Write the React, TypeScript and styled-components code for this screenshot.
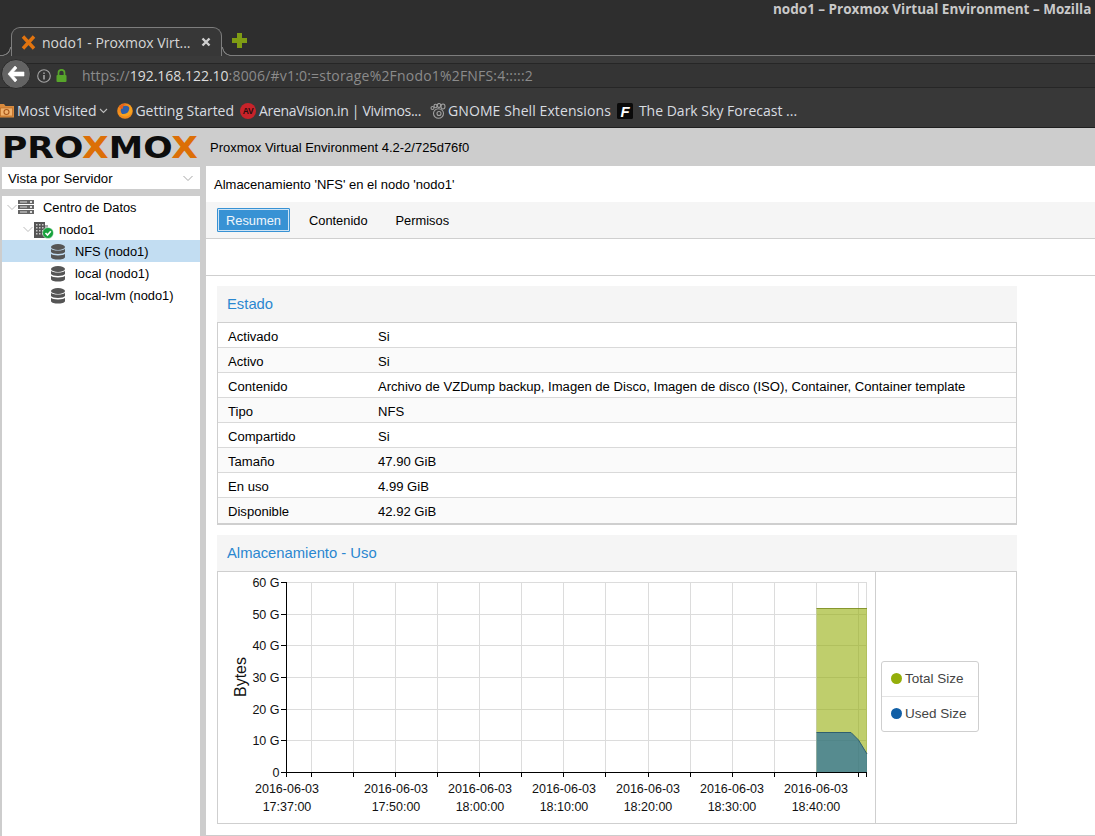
import React from "react";
import styled, { createGlobalStyle } from "styled-components";

const Global = createGlobalStyle`
  html, body { margin: 0; padding: 0; background: #cdcdcd; }
  body { width: 1095px; height: 836px; overflow: hidden; }
  * { box-sizing: border-box; }
`;

const Page = styled.div`
  width: 1095px;
  height: 836px;
  display: flex;
  flex-direction: column;
  overflow: hidden;
  font-family: "Liberation Sans", Arial, sans-serif;
  font-size: 12.85px;
  color: #000;
`;

const TitleBar = styled.div`
  height: 27px;
  background: #2e2e2e;
  padding: 0 0 0 773px;
  color: #c9c9c9;
  font: 700 13.5px/18px "Open Sans", sans-serif;
  white-space: nowrap;
  overflow: hidden;
`;

const TabStrip = styled.div`
  height: 29px;
  background: #2e2e2e;
  border-bottom: 1px solid #7d7d7d;
  display: flex;
  align-items: flex-start;
  padding-left: 11px;
`;

const Tab = styled.div`
  position: relative;
  width: 211px;
  height: 29px;
  background: #373737;
  border: 1px solid #7d7d7d;
  border-bottom: none;
  border-radius: 9px 9px 0 0;
  display: flex;
  align-items: center;
  padding: 0 0 0 9px;
  color: #d6d6d6;
  font: 400 14px "Open Sans", sans-serif;
  letter-spacing: -0.05px;
  white-space: nowrap;
  &::before, &::after {
    content: "";
    position: absolute;
    bottom: 0;
    width: 9px;
    height: 9px;
  }
  &::before {
    left: -10px;
    background: radial-gradient(circle at 0 0, #2e2e2e 7.5px, #7d7d7d 8px, #7d7d7d 8.6px, #373737 9px);
  }
  &::after {
    right: -10px;
    background: radial-gradient(circle at 100% 0, #2e2e2e 7.5px, #7d7d7d 8px, #7d7d7d 8.6px, #373737 9px);
  }
`;

const TabLabel = styled.span`
  margin-left: 6px;
  width: 158px;
`;

const TabClose = styled.span`
  margin-left: 1px;
  display: flex;
`;

const NewTab = styled.svg`
  margin: 6px 0 0 10px;
`;

const NavBar = styled.div`
  height: 32px;
  background: #3a3a3a;
  position: relative;
  padding: 7px 0 0 0;
  border-bottom: 1px solid #262626;
`;

const BackButton = styled.div`
  position: absolute;
  left: 1px;
  top: 3px;
  width: 30px;
  height: 30px;
  border-radius: 50%;
  background: #636363;
  border: 1px solid #2b2b2b;
  display: flex;
  align-items: center;
  justify-content: center;
  z-index: 2;
`;

const UrlField = styled.div`
  height: 24px;
  margin-left: 20px;
  background: #343434;
  border-top: 1px solid #262626;
  display: flex;
  align-items: center;
  padding-left: 17px;
  font: 400 14px "Open Sans", sans-serif;
  color: #8b8b8b;
  white-space: nowrap;
`;

const UrlIcons = styled.span`
  display: flex;
  align-items: center;
  gap: 5px;
  width: 45px;
  flex: none;
`;

const UrlHost = styled.span`
  color: #dcdcdc;
  letter-spacing: -0.02px;
`;

const UrlTail = styled.span`
  letter-spacing: 0.19px;
`;

const BookmarkBar = styled.div`
  height: 40px;
  background: #383838;
  border-bottom: 1px solid #1f1f1f;
  display: flex;
  align-items: center;
  padding: 6px 0 0 0;
  color: #d8dce0;
  font: 400 14px "Open Sans", sans-serif;
  white-space: nowrap;
`;

const Bookmark = styled.span<{ $gap?: number; $left?: number; $spacing?: number }>`
  display: flex;
  align-items: center;
  gap: ${(p) => p.$gap ?? 3}px;
  margin-left: ${(p) => p.$left ?? 0}px;
  letter-spacing: ${(p) => p.$spacing ?? 0}px;
`;

const BookmarkChevron = styled.svg`
  margin-left: 3px;
`;

const Header = styled.div`
  height: 38px;
  flex: none;
  background: #cdcdcd;
  display: flex;
  align-items: center;
  padding-left: 1px;
  font-size: 13px;
`;

const Logo = styled.svg`
  flex: none;
  margin-right: 11px;
`;

const Body = styled.div`
  flex: 1;
  min-height: 0;
  display: flex;
  padding-left: 2px;
`;

const Sidebar = styled.div`
  width: 198px;
  flex: none;
  display: flex;
  flex-direction: column;
  gap: 7px;
  padding-top: 1px;
`;

const ViewSelect = styled.div`
  height: 22px;
  background: #fff;
  display: flex;
  align-items: center;
  justify-content: space-between;
  padding: 0 6px;
  font-size: 13.2px;
`;

const Tree = styled.div`
  flex: 1;
  background: #fff;
`;

const TreeRow = styled.div<{ $depth: number; $selected?: boolean }>`
  height: 22px;
  display: flex;
  align-items: center;
  padding-left: ${(p) => 4 + p.$depth * 16}px;
  background: ${(p) => (p.$selected ? "#c2ddf2" : "#fff")};
`;

const TreeChevron = styled.span`
  width: 12px;
  height: 12px;
  flex: none;
  display: flex;
`;

const TreeIcon = styled.span`
  width: 16px;
  height: 18px;
  flex: none;
  display: flex;
  margin-right: 9px;
`;

const Main = styled.div`
  margin-left: 6px;
  flex: 1;
  min-width: 0;
  height: 670px;
  background: #fff;
  border-bottom: 1px solid #ccc;
  display: flex;
  flex-direction: column;
`;

const MainTitle = styled.div`
  height: 36px;
  flex: none;
  padding: 0 0 0 8px;
  display: flex;
  align-items: center;
  font-size: 13px;
`;

const TabBar = styled.div`
  height: 37px;
  flex: none;
  background: #f5f5f5;
  border-bottom: 1px solid #cfcfcf;
  display: flex;
  align-items: center;
  padding: 0 0 0 11px;
`;

const ViewTab = styled.div<{ $active?: boolean }>`
  height: 24px;
  display: flex;
  align-items: center;
  padding: 0 8px;
  margin-right: 10px;
  font-size: 12.85px;
  background: ${(p) => (p.$active ? "#3892d4" : "transparent")};
  color: ${(p) => (p.$active ? "#f0f6fb" : "#000")};
  border: 1px solid ${(p) => (p.$active ? "#3892d4" : "transparent")};
  box-shadow: ${(p) => (p.$active ? "inset 0 0 0 1px #cfe4f5" : "none")};
  border-radius: 1px;
`;

const Toolbar = styled.div`
  height: 37px;
  flex: none;
  border-bottom: 1px solid #cfcfcf;
`;

const Content = styled.div`
  padding: 10px 0 0 11px;
  width: 811px;
  display: flex;
  flex-direction: column;
  gap: 10px;
`;

const Panel = styled.div`
  display: flex;
  flex-direction: column;
`;

const PanelHead = styled.div`
  height: 36px;
  background: #f5f5f5;
  display: flex;
  align-items: center;
  padding: 0 0 1px 10px;
  color: #2a87d0;
  font-size: 14.8px;
`;

const Table = styled.div`
  border: 1px solid #cfcfcf;
  border-bottom-width: 2px;
`;

const Row = styled.div<{ $odd: boolean }>`
  height: 25px;
  display: grid;
  grid-template-columns: 150px 1fr;
  align-items: center;
  padding: 3px 10px 0;
  background: ${(p) => (p.$odd ? "#fafafa" : "#fff")};
  border-bottom: 1px solid #d9d9d9;
  font-size: 13.08px;
  &:last-child { border-bottom-color: transparent; }
`;

const ChartBox = styled.div`
  height: 253px;
  border: 1px solid #cfcfcf;
  display: flex;
`;

const ChartSvg = styled.svg`
  flex: none;
  display: block;
  font-family: "Liberation Sans", Arial, sans-serif;
`;

const LegendColumn = styled.div`
  flex: 1;
  border-left: 1px solid #cfcfcf;
  padding: 89px 0 0 5px;
`;

const Legend = styled.div`
  width: 98px;
  height: 71px;
  border: 1px solid #cfcfcf;
  border-radius: 3px;
  display: flex;
  flex-direction: column;
`;

const LegendItem = styled.div`
  flex: 1;
  display: flex;
  align-items: center;
  padding: 0 0 2px 9px;
  gap: 3px;
  color: #444;
  font-size: 13.5px;
  & + & { border-top: 1px solid #e4e4e4; }
`;

const Dot = styled.span<{ $color: string }>`
  width: 11px;
  height: 11px;
  border-radius: 50%;
  background: ${(p) => p.$color};
`;

const rows: [string, string][] = [
  ["Activado", "Si"],
  ["Activo", "Si"],
  ["Contenido", "Archivo de VZDump backup, Imagen de Disco, Imagen de disco (ISO), Container, Container template"],
  ["Tipo", "NFS"],
  ["Compartido", "Si"],
  ["Tamaño", "47.90 GiB"],
  ["En uso", "4.99 GiB"],
  ["Disponible", "42.92 GiB"],
];

const Chevron = ({ c = "#a8a8a8" }: { c?: string }) => (
  <svg width="12" height="12" viewBox="0 0 12 12">
    <path d="M1.5 4 L6 8.5 L10.5 4" fill="none" stroke={c} strokeWidth="1" />
  </svg>
);

const DbIcon = () => (
  <svg width="16" height="18" viewBox="0 0 16 18">
    <g fill="#555">
      <ellipse cx="8" cy="5" rx="7" ry="3" />
      <path d="M1 6.8 C2 9.2 14 9.2 15 6.8 V10 C14 12.5 2 12.5 1 10Z" />
      <path d="M1 11.8 C2 14 14 14 15 11.8 V15.2 C14 18.4 2 18.4 1 15.2Z" />
    </g>
  </svg>
);

const ServerIcon = () => (
  <svg width="16" height="18" viewBox="0 0 16 18">
    <g fill="#666">
      <rect x="0" y="2" width="16" height="4" />
      <rect x="0" y="7" width="16" height="4" />
      <rect x="0" y="12" width="16" height="4" />
    </g>
    <g fill="#ddd">
      <rect x="2" y="3.5" width="7" height="1" />
      <rect x="2" y="8.5" width="7" height="1" />
      <rect x="2" y="13.5" width="7" height="1" />
      <rect x="12" y="3" width="2" height="2" />
      <rect x="12" y="8" width="2" height="2" />
      <rect x="12" y="13" width="2" height="2" />
    </g>
  </svg>
);

const NodeIcon = () => (
  <svg width="20" height="20" viewBox="0 0 20 20" style={{ flex: "none" }}>
    <rect x="0" y="2" width="11" height="16" fill="#555" />
    <rect x="11" y="5" width="3" height="13" fill="#aaa" />
    <g fill="#c9c9c9">
      {[4, 7, 10, 13].map((y) =>
        [2, 5, 8].map((x) => <rect key={`${x}-${y}`} x={x} y={y} width="1.5" height="1.5" />)
      )}
    </g>
    <circle cx="14" cy="13" r="5.5" fill="#17a23c" stroke="#fff" strokeWidth="0.5" />
    <path d="M11.5 13 L13.5 15 L16.8 11.3" fill="none" stroke="#fff" strokeWidth="1.7" />
  </svg>
);

const gridX = [311.5, 353.5, 395.5, 437.5, 479.5, 521.5, 563.5, 605.5, 648.5, 690.5, 732.5, 774.5, 816.5, 858.5];
const gridY: [number, string][] = [
  [582.5, "60 G"],
  [614.5, "50 G"],
  [645.5, "40 G"],
  [677.5, "30 G"],
  [709.5, "20 G"],
  [740.5, "10 G"],
  [772.5, "0"],
];
const dates: [number, string][] = [
  [287, "17:37:00"],
  [396, "17:50:00"],
  [480, "18:00:00"],
  [564, "18:10:00"],
  [648, "18:20:00"],
  [732, "18:30:00"],
  [816, "18:40:00"],
];

const Chart = () => (
  <ChartSvg width="657" height="251" viewBox="218 572 657 251">
    {gridY.slice(0, 6).map(([y]) => (
      <line key={y} x1="286.5" x2="867" y1={y} y2={y} stroke="#dcdcdc" />
    ))}
    {gridX.map((x) => (
      <line key={x} x1={x} x2={x} y1="582.5" y2="772.5" stroke="#dcdcdc" />
    ))}
    <line x1="866.5" x2="866.5" y1="582.5" y2="772.5" stroke="#dcdcdc" />
    <path d="M816.5 608.5 H867 V772.5 H816.5Z" fill="#94ae0a" fillOpacity="0.6" />
    <path d="M816.5 608.5 H867" stroke="#94ae0a" strokeOpacity="0.8" fill="none" />
    <path d="M816.5 608.5 H867" stroke="#333" strokeOpacity="0.25" fill="none" />
    <path d="M816.5 732.5 H851 L858.5 740 L867 754 V772.5 H816.5Z" fill="#115fa6" fillOpacity="0.6" />
    <path d="M816.5 732.5 H851 L858.5 740 L867 754" stroke="#2f5f70" fill="none" />
    <line x1="286.5" x2="286.5" y1="582" y2="777" stroke="#000" />
    <line x1="286" x2="867" y1="772.5" y2="772.5" stroke="#000" />
    {gridY.map(([y, t]) => (
      <g key={t}>
        <line x1="281" x2="287" y1={y} y2={y} stroke="#000" />
        <text x="279.5" y={y + 4.5} textAnchor="end" fontSize="12.5" fill="#111">
          {t}
        </text>
      </g>
    ))}
    {gridX.map((x) => (
      <line key={x} x1={x} x2={x} y1="772" y2="777" stroke="#000" />
    ))}
    <line x1="866.5" x2="866.5" y1="772" y2="777" stroke="#000" />
    {dates.map(([x, t]) => (
      <text key={t} x={x} y="793" textAnchor="middle" fontSize="12.5" fill="#111">
        <tspan x={x}>2016-06-03</tspan>
        <tspan x={x} dy="18">
          {t}
        </tspan>
      </text>
    ))}
    <text transform="translate(245.5 677) rotate(-90)" textAnchor="middle" fontSize="16" fill="#111">
      Bytes
    </text>
  </ChartSvg>
);

export default function App() {
  return (
    <Page>
      <Global />
      <TitleBar>nodo1 – Proxmox Virtual Environment – Mozilla Firefox</TitleBar>
      <TabStrip>
        <Tab>
          <svg width="15" height="15" viewBox="0 0 15 15" style={{ flex: "none" }}>
            <path d="M2 1.5 L13 13.5 M13 1.5 L2 13.5" stroke="#e2740f" strokeWidth="3.4" />
          </svg>
          <TabLabel>nodo1 - Proxmox Virt...</TabLabel>
          <TabClose>
            <svg width="10" height="10" viewBox="0 0 10 10">
              <path d="M1.5 1.5 L8.5 8.5 M8.5 1.5 L1.5 8.5" stroke="#cfcfcf" strokeWidth="2.4" />
            </svg>
          </TabClose>
        </Tab>
        <NewTab width="15" height="15" viewBox="0 0 15 15">
          <path d="M5 0 H10 V5 H15 V10 H10 V15 H5 V10 H0 V5 H5Z" fill="#7f9c14" />
        </NewTab>
      </TabStrip>
      <NavBar>
        <BackButton>
          <svg width="20" height="18" viewBox="0 0 20 18">
            <path d="M9 1 L2 9 L9 17 L11 15 L7.5 11 H18 V7 H7.5 L11 3Z" fill="#fff" stroke="#fff" strokeWidth="0.6" strokeLinejoin="round" />
          </svg>
        </BackButton>
        <UrlField>
          <UrlIcons>
            <svg width="14" height="14" viewBox="0 0 14 14">
              <circle cx="7" cy="7" r="6.3" fill="none" stroke="#a5a5a5" strokeWidth="1.1" />
              <rect x="6.3" y="6" width="1.4" height="4.5" fill="#b5b5b5" />
              <rect x="6.3" y="3.5" width="1.4" height="1.4" fill="#b5b5b5" />
            </svg>
            <svg width="11" height="13" viewBox="0 0 11 13">
              <path d="M2.5 6 V3.8 A3 3 0 0 1 8.5 3.8 V6" fill="none" stroke="#57a52b" strokeWidth="1.7" />
              <rect x="0.5" y="6" width="10" height="7" rx="1" fill="#57a52b" />
            </svg>
          </UrlIcons>
          <span>
            https://<UrlHost>192.168.122.10</UrlHost>
            <UrlTail>:8006/#v1:0:=storage%2Fnodo1%2FNFS:4:::::2</UrlTail>
          </span>
        </UrlField>
      </NavBar>
      <BookmarkBar>
        <Bookmark $left={-1} $gap={3} $spacing={-0.03}>
          <svg width="15" height="15" viewBox="0 0 15 15">
            <path d="M0 1 H5 L6.5 3 H15 V14.5 H0Z" fill="#d98a3d" />
            <rect x="1.5" y="5" width="12" height="8" fill="#f2b26d" stroke="#b96a24" strokeWidth="0.7" />
            <circle cx="7.5" cy="9" r="2.5" fill="none" stroke="#a8561a" strokeWidth="1.1" />
          </svg>
          Most Visited
        </Bookmark>
        <BookmarkChevron width="9" height="9" viewBox="0 0 9 9">
          <path d="M1 3 L4.5 6.5 L8 3" fill="none" stroke="#bbb" strokeWidth="1.1" />
        </BookmarkChevron>
        <Bookmark $left={9} $gap={2} $spacing={-0.03}>
          <svg width="16" height="16" viewBox="0 0 16 16">
            <circle cx="8" cy="8" r="7.8" fill="#f08a1d" />
            <circle cx="8.5" cy="7.5" r="4.8" fill="#2f5fa8" />
            <path d="M1 9 C3 14 11 15.5 15 9.5 C15.8 6 14 2.5 11.5 1.5 C13 4 12.5 8 10 10 C7 12 3 11 1 9Z" fill="#f6a21f" />
            <path d="M2 4 C4 1 7 0.5 9 1 C6.5 2 5.5 3.5 6 5.5 C4 6 3 5.5 2 4Z" fill="#e8601c" />
          </svg>
          Getting Started
        </Bookmark>
        <Bookmark $left={6} $gap={3} $spacing={-0.3}>
          <svg width="16" height="16" viewBox="0 0 16 16">
            <circle cx="8" cy="8" r="8" fill="#c8232a" />
            <text x="8" y="11" textAnchor="middle" fontSize="8.5" fontWeight="700" fill="#2a0d0d" fontFamily="Liberation Sans, sans-serif">
              AV
            </text>
          </svg>
          ArenaVision.in | Vivimos...
        </Bookmark>
        <Bookmark $left={9} $gap={2} $spacing={0.09}>
          <svg width="16" height="16" viewBox="0 0 16 16" fill="none" stroke="#a0a0a0" strokeWidth="1.1">
            <ellipse cx="8.5" cy="10.5" rx="5" ry="4.7" />
            <circle cx="2.5" cy="5" r="1.5" />
            <ellipse cx="5.5" cy="3" rx="1.5" ry="1.8" />
            <ellipse cx="9" cy="2.5" rx="1.7" ry="2" />
            <ellipse cx="13" cy="3.5" rx="2" ry="2.5" />
            <circle cx="9" cy="10.5" r="2" />
          </svg>
          GNOME Shell Extensions
        </Bookmark>
        <Bookmark $left={6} $gap={6}>
          <svg width="16" height="16" viewBox="0 0 16 16">
            <rect width="16" height="16" rx="1.5" fill="#0a0a0a" />
            <text x="8" y="14" textAnchor="middle" fontSize="15" fontWeight="700" fontStyle="italic" fill="#fff" fontFamily="Liberation Sans, sans-serif">
              F
            </text>
          </svg>
          The Dark Sky Forecast ...
        </Bookmark>
      </BookmarkBar>
      <Header>
        <Logo width="198" height="34" viewBox="0 0 198 34">
          <text x="1" y="28" fontFamily="DejaVu Sans, sans-serif" fontWeight="700" fontSize="30" textLength="196" lengthAdjust="spacingAndGlyphs" fill="#0d0d0d">
            PRO<tspan fill="#dc6f07">X</tspan>MO<tspan fill="#dc6f07">X</tspan>
          </text>
        </Logo>
        Proxmox Virtual Environment 4.2-2/725d76f0
      </Header>
      <Body>
        <Sidebar>
          <ViewSelect>
            Vista por Servidor
            <Chevron />
          </ViewSelect>
          <Tree>
            <TreeRow $depth={0}>
              <TreeChevron><Chevron c="#bdbdbd" /></TreeChevron>
              <TreeIcon><ServerIcon /></TreeIcon>
              Centro de Datos
            </TreeRow>
            <TreeRow $depth={1}>
              <TreeChevron><Chevron c="#bdbdbd" /></TreeChevron>
              <TreeIcon><NodeIcon /></TreeIcon>
              nodo1
            </TreeRow>
            <TreeRow $depth={2} $selected>
              <TreeChevron />
              <TreeIcon><DbIcon /></TreeIcon>
              NFS (nodo1)
            </TreeRow>
            <TreeRow $depth={2}>
              <TreeChevron />
              <TreeIcon><DbIcon /></TreeIcon>
              local (nodo1)
            </TreeRow>
            <TreeRow $depth={2}>
              <TreeChevron />
              <TreeIcon><DbIcon /></TreeIcon>
              local-lvm (nodo1)
            </TreeRow>
          </Tree>
        </Sidebar>
        <Main>
          <MainTitle>Almacenamiento 'NFS' en el nodo 'nodo1'</MainTitle>
          <TabBar>
            <ViewTab $active>Resumen</ViewTab>
            <ViewTab>Contenido</ViewTab>
            <ViewTab>Permisos</ViewTab>
          </TabBar>
          <Toolbar />
          <Content>
            <Panel>
              <PanelHead>Estado</PanelHead>
              <Table>
                {rows.map(([k, v], i) => (
                  <Row key={k} $odd={i % 2 === 1}>
                    <span>{k}</span>
                    <span>{v}</span>
                  </Row>
                ))}
              </Table>
            </Panel>
            <Panel>
              <PanelHead>Almacenamiento - Uso</PanelHead>
              <ChartBox>
                <Chart />
                <LegendColumn>
                  <Legend>
                    <LegendItem><Dot $color="#94ae0a" />Total Size</LegendItem>
                    <LegendItem><Dot $color="#115fa6" />Used Size</LegendItem>
                  </Legend>
                </LegendColumn>
              </ChartBox>
            </Panel>
          </Content>
        </Main>
      </Body>
    </Page>
  );
}
